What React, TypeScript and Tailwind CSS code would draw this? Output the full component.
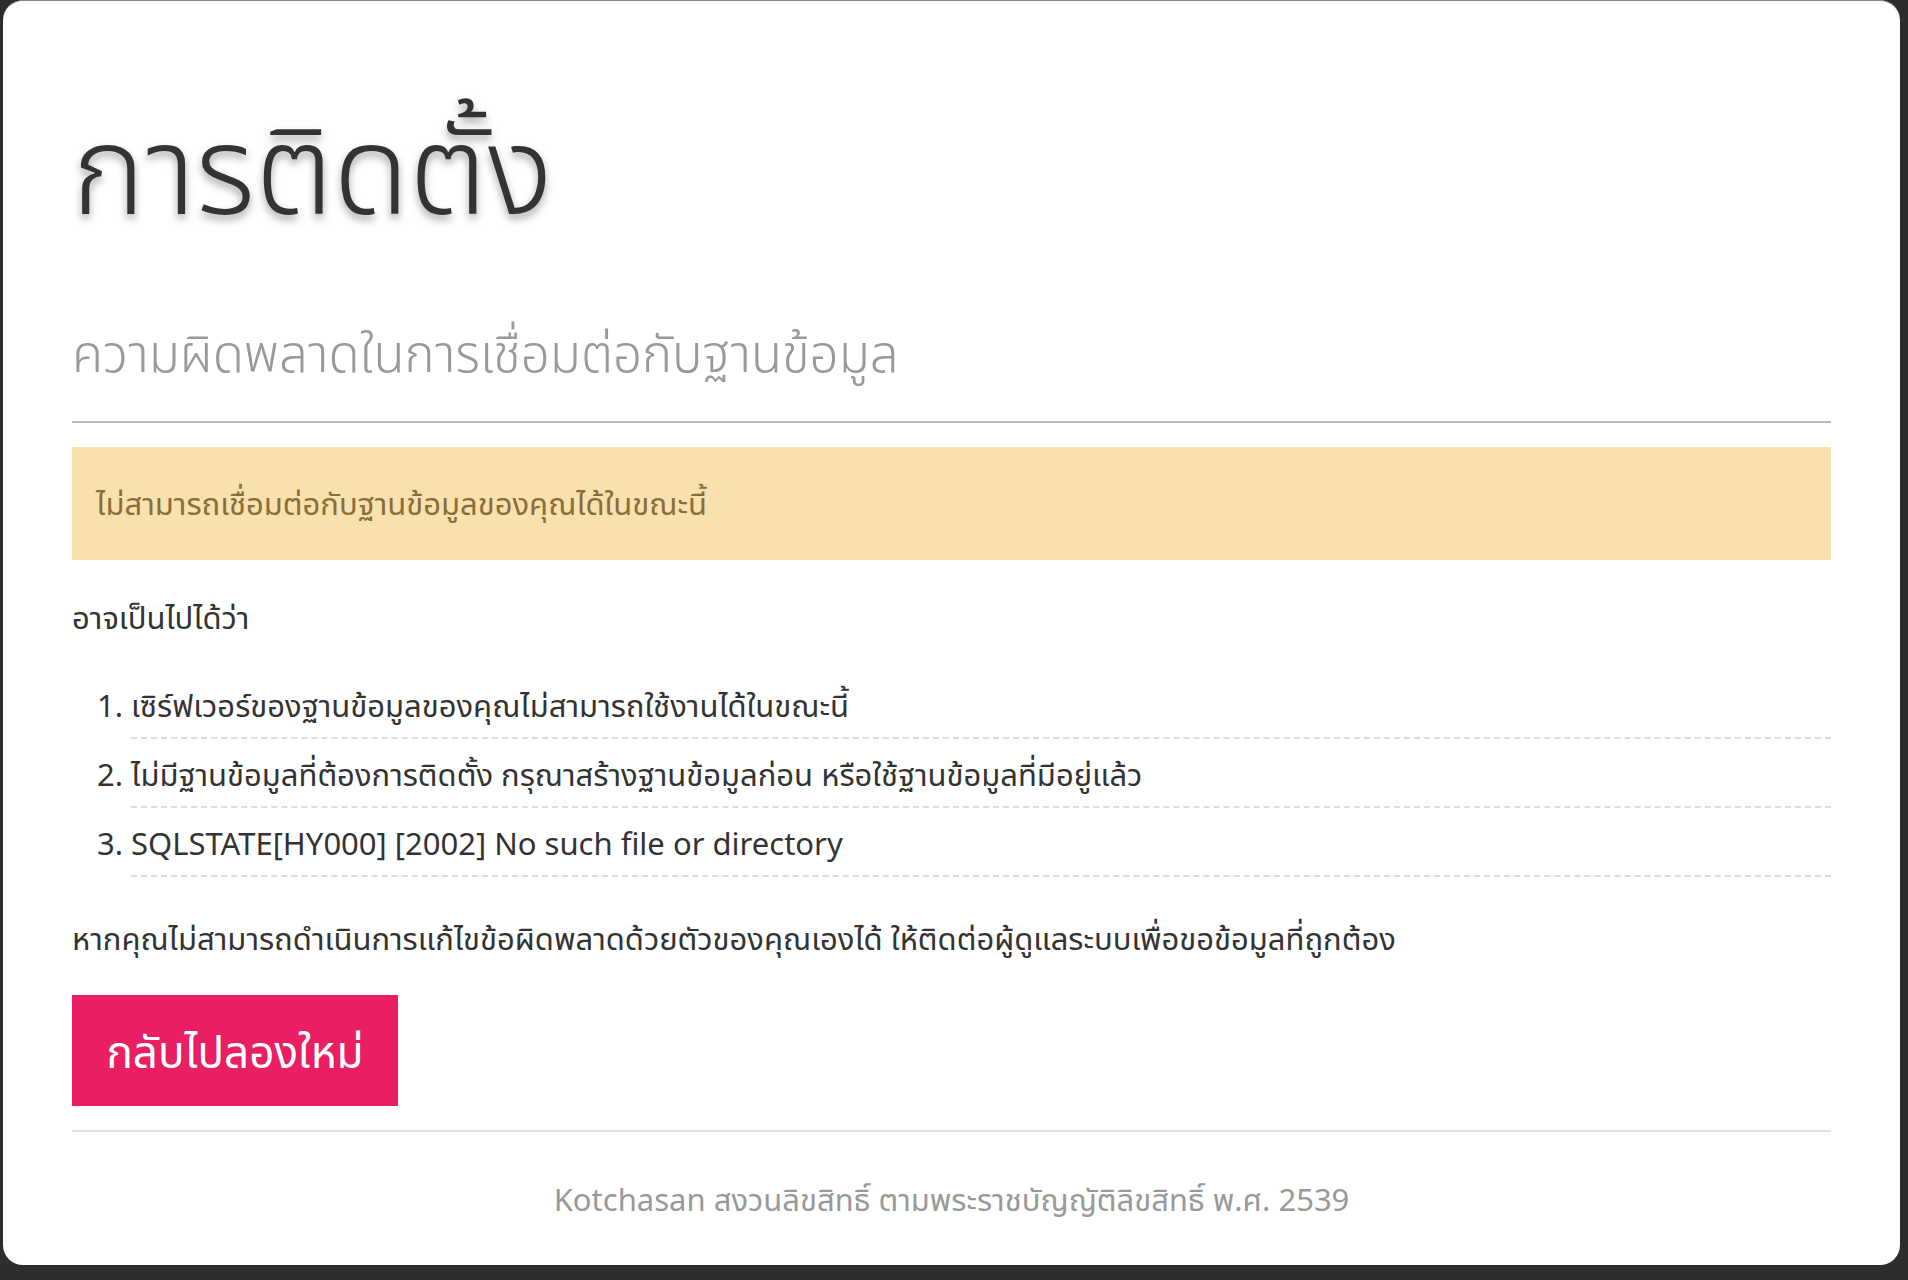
import React from "react";

const causes = [
    "เซิร์ฟเวอร์ของฐานข้อมูลของคุณไม่สามารถใช้งานได้ในขณะนี้",
    "ไม่มีฐานข้อมูลที่ต้องการติดตั้ง กรุณาสร้างฐานข้อมูลก่อน หรือใช้ฐานข้อมูลที่มีอยู่แล้ว",
    "SQLSTATE[HY000] [2002] No such file or directory",
];

const font = "font-['Noto_Sans','Noto_Sans_Thai','Liberation_Sans',sans-serif]";

const App = () => {
    return (
        <div className={`min-h-screen bg-[#2d2d2d] pb-[15px] pl-[3px] pr-[8px] ${font}`}>
            <div className="flex h-[1265px] flex-col rounded-[20px] border-t border-[#8a8a8a] bg-white px-[69px] pt-[90px]">
                <h1 className="h-[150px] text-[124px] font-light leading-[150px] text-[#333] [text-shadow:0_5px_8px_rgba(0,0,0,0.35)]">
                    การติดตั้ง
                </h1>

                <h2 className="mt-[76px] h-[70px] text-[51px] font-light leading-[70px] text-[#999]">
                    ความผิดพลาดในการเชื่อมต่อกับฐานข้อมูล
                </h2>

                <hr className="mt-[34px] h-[2px] border-0 bg-[#b8b8b8]" />

                <div className="mt-[24px] flex h-[113px] items-center bg-[#f9e1ae] px-[24px] text-[31px] text-[#8a6d3b]">
                    ไม่สามารถเชื่อมต่อกับฐานข้อมูลของคุณได้ในขณะนี้
                </div>

                <p className="mt-[36px] h-[42px] text-[31px] leading-[42px] text-[#333]">อาจเป็นไปได้ว่า</p>

                <ol className="mt-[32px] flex flex-col pl-[59px]">
                    {causes.map((text, index) => (
                        <li
                            key={index}
                            className="flex h-[69px] items-center gap-[8px] border-b-2 border-dashed border-[#ddd] pt-[4px] text-[31px] text-[#333]"
                        >
                            <span className="-ml-[34px] w-[26px] text-right">{index + 1}.</span>
                            <span>{text}</span>
                        </li>
                    ))}
                </ol>

                <p className="mt-[40px] h-[42px] text-[31px] leading-[42px] text-[#333]">
                    หากคุณไม่สามารถดำเนินการแก้ไขข้อผิดพลาดด้วยตัวของคุณเองได้ ให้ติดต่อผู้ดูแลระบบเพื่อขอข้อมูลที่ถูกต้อง
                </p>

                <div className="mt-[36px]">
                    <button className="flex h-[111px] w-[326px] items-center justify-center bg-[#e91e63] text-[44px] text-white">
                        กลับไปลองใหม่
                    </button>
                </div>

                <hr className="mt-[24px] h-[2px] border-0 bg-[#e2e2e2]" />

                <p className="mt-[44px] text-center text-[31px] text-[#999]">
                    Kotchasan สงวนลิขสิทธิ์ ตามพระราชบัญญัติลิขสิทธิ์ พ.ศ. 2539
                </p>
            </div>
        </div>
    );
};

export default App;
